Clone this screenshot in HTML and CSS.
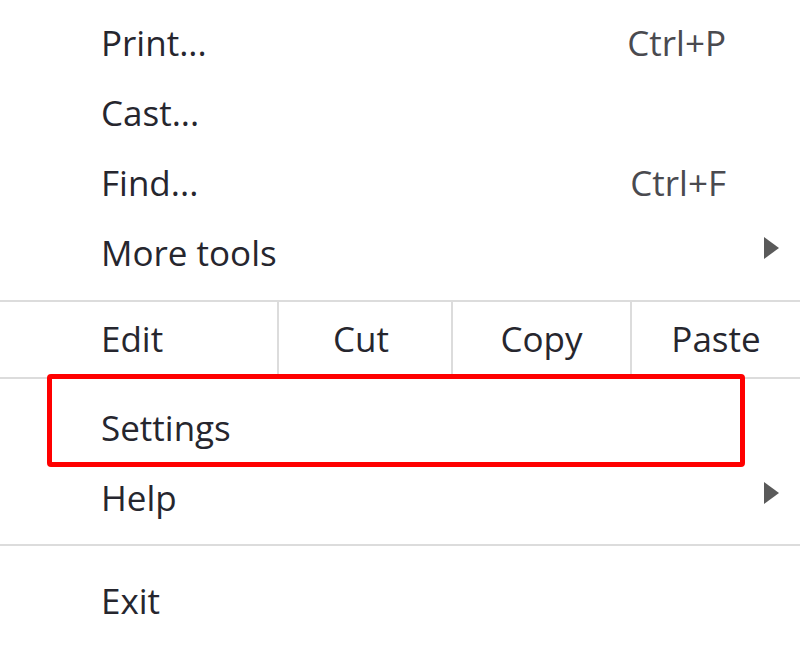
FILE: index.html
```html
<!DOCTYPE html>
<html>
<head>
<meta charset="utf-8">
<link rel="stylesheet" href="styles.css">
</head>
<body>
<div class="menu">
  <div class="group group-top">
    <div class="item"><span class="label">Print...</span><span class="shortcut">Ctrl+P</span></div>
    <div class="item"><span class="label">Cast...</span></div>
    <div class="item"><span class="label">Find...</span><span class="shortcut shortcut-f">Ctrl+F</span></div>
    <div class="item"><span class="label">More tools</span><span class="arrow"></span></div>
  </div>
  <div class="sep"></div>
  <div class="edit-row">
    <div class="edit-cell edit-label">Edit</div>
    <div class="edit-cell edit-cut">Cut</div>
    <div class="edit-cell edit-copy">Copy</div>
    <div class="edit-cell edit-paste">Paste</div>
  </div>
  <div class="sep"></div>
  <div class="group group-mid">
    <div class="item"><span class="label">Settings</span></div>
    <div class="item"><span class="label">Help</span><span class="arrow"></span></div>
  </div>
  <div class="sep"></div>
  <div class="group group-bottom">
    <div class="item"><span class="label">Exit</span></div>
  </div>
  <div class="highlight"></div>
</div>
</body>
</html>
```

FILE: styles.css
```css
html, body {
  margin: 0;
  padding: 0;
  background: #ffffff;
}

.menu {
  position: relative;
  width: 800px;
  height: 647px;
  font-family: "Open Sans", "Noto Sans", "Liberation Sans", sans-serif;
  font-size: 35px;
  color: #26262e;
  display: flex;
  flex-direction: column;
}

.group-top {
  padding-top: 7px;
  padding-bottom: 13px;
}

.group-mid {
  padding-top: 13px;
  padding-bottom: 12px;
}

.group-bottom {
  padding-top: 19px;
}

.item {
  height: 70px;
  display: flex;
  align-items: center;
  padding-left: 101px;
  padding-right: 21px;
}

.label {
  flex: 1;
}

.shortcut {
  color: #4a4a4f;
  margin-right: 53px;
}

.arrow {
  width: 0;
  height: 0;
  border-top: 11px solid transparent;
  border-bottom: 11px solid transparent;
  border-left: 15px solid #5a5a5a;
  margin-top: -8px;
}

.sep {
  height: 2px;
  background: #dcdcdc;
}

.edit-row {
  height: 75px;
  display: grid;
  grid-template-columns: 279px 174px 179px 1fr;
}

.edit-cell {
  display: flex;
  align-items: center;
  justify-content: center;
  padding-bottom: 2px;
}

.edit-label {
  justify-content: flex-start;
  padding-left: 101px;
  border-right: 2px solid #dcdcdc;
}

.edit-cut {
  border-right: 2px solid #dcdcdc;
  padding-right: 8px;
}

.edit-copy {
  border-right: 2px solid #dcdcdc;
}

.highlight {
  position: absolute;
  left: 47px;
  top: 374px;
  width: 688px;
  height: 83px;
  border: 5px solid #ff0000;
  border-radius: 4px;
}
```
